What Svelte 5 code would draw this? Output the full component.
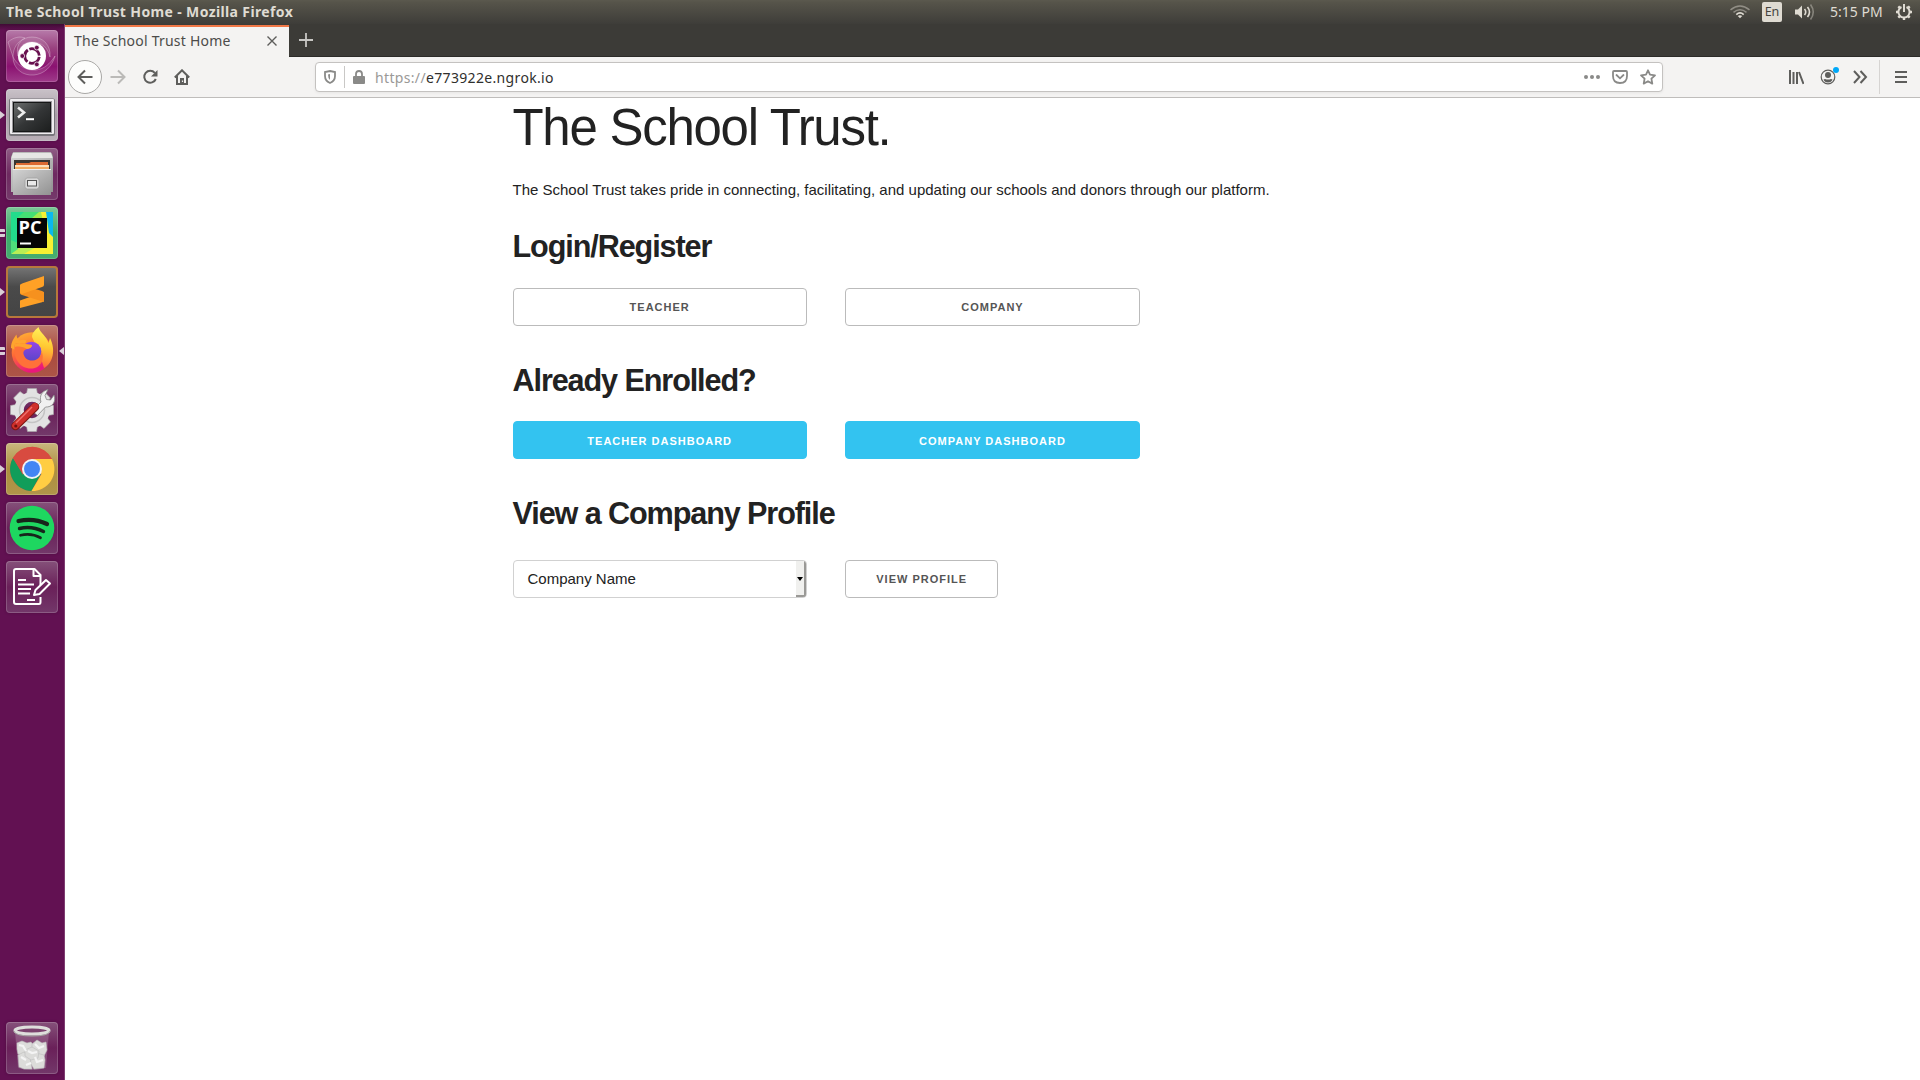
<script>
  const launchers = [
    { id: 'dash', pips: 0 },
    { id: 'terminal', pips: 1 },
    { id: 'files', pips: 0 },
    { id: 'pycharm', pips: 2 },
    { id: 'sublime', pips: 1 },
    { id: 'firefox', pips: 2, active: true },
    { id: 'settings', pips: 0 },
    { id: 'chrome', pips: 1 },
    { id: 'spotify', pips: 0 },
    { id: 'writer', pips: 0 },
    { id: 'trash', pips: 0 }
  ];
  const gearTeeth = [0, 45, 90, 135, 180, 225, 270, 315];
</script>

{#snippet art(id)}
  <svg class="art" viewBox="0 0 52 52" width="52" height="52">
    {#if id === 'dash'}
      <g fill="#fff" fill-opacity=".1" stroke="#fff" stroke-opacity=".3" stroke-width=".9">
        <path d="M12 26C9 14 16 7 26 7c11 0 19 8 18 20-2-9-8-15-18-15-9 0-14 6-14 14z" />
        <path d="M7 27c0 12 10 19 21 18 10-1 18-8 21-19-5 8-11 13-19 14-10 1-18-4-23-13z" />
        <path d="M2 12c6-5 12-6 17-4-8 4-12 10-12 19z" fill-opacity=".06" />
      </g>
      <circle cx="26" cy="26" r="14" fill="#fff" />
      <circle cx="26" cy="26" r="7.300" fill="none" stroke="#68104f" stroke-width="2.800" stroke-dasharray="13.600 1.700" stroke-dashoffset="-.900" />
      <g fill="#68104f" stroke="#fff" stroke-width=".7">
        <circle cx="16.300" cy="26" r="2.400" /><circle cx="30.800" cy="17.600" r="2.400" /><circle cx="30.800" cy="34.400" r="2.400" />
      </g>
    {:else if id === 'terminal'}
      <rect x="3" y="9.500" width="46" height="37.500" rx="2" fill="#77757a" />
      <rect x="4" y="10" width="44" height="35" rx="1" fill="#efedef" />
      <rect x="6" y="12" width="40" height="32" fill="#99979b" />
      <rect x="7" y="13" width="38" height="30" fill="#151616" />
      <rect x="8" y="14" width="36" height="28" fill="url(#termGlass)" />
      <path d="M12 18.500l6 5-6 5" fill="none" stroke="#eee" stroke-width="2.600" />
      <path d="M20 30.200h8" stroke="#fff" stroke-width="2" />
    {:else if id === 'files'}
      <path d="M6 7q0-3 3-3h34q3 0 4 4v36H5V8z" fill="#8d8d8d" />
      <path d="M7 4.500h38l2 6H5z" fill="#e6e6e4" />
      <path d="M5 10h42v34H5z" fill="url(#steel)" />
      <path d="M8 12h36v11H8z" fill="#393532" />
      <path d="M10 15h13l2-1h17v8H10z" fill="#dc6a32" />
      <path d="M9 17h34v5H9z" fill="#f3ad65" />
      <path d="M9 18h34" stroke="#fff1d8" stroke-width="1.300" />
      <path d="M7 21.500h38V47H7z" fill="url(#steel)" />
      <path d="M7 21.500h38" stroke="#f0f0f0" />
      <rect x="19" y="30" width="14" height="11" rx="2.400" fill="#d8d8d8" stroke="#999" stroke-width=".6" />
      <rect x="21.500" y="32.500" width="9" height="5.500" fill="#e9e9e9" stroke="#535353" />
    {:else if id === 'pycharm'}
      <rect x="5" y="5" width="42" height="42" fill="#22dc8c" />
      <path d="M18 5h15v6H11z" fill="#45df74" />
      <path d="M26 11l7-6h7l3 8v20H26z" fill="#a5ea4c" />
      <path d="M5 47l7-9 14-2 10 11z" fill="#b9ee55" />
      <path d="M5 47V33l7 3v6z" fill="#4fe07a" />
      <path d="M18 47l12-7 10-8 3-15 4 15v15z" fill="#f7f033" />
      <path d="M35 5h6l6 24v7l-7-8z" fill="#f7f033" />
      <path d="M40 5h7v25l-4-4z" fill="#0ab9ee" />
      <rect x="11" y="11" width="30" height="30" fill="#050505" />
      <text class="pc" x="12.500" y="27" textLength="23" lengthAdjust="spacingAndGlyphs">PC</text>
      <path d="M14 36.500h11" stroke="#fff" stroke-width="2" />
    {:else if id === 'sublime'}
      <path d="M14 34.500L38 26v7.500q0 2-2 2.700L14 42z" fill="#ffa126" />
      <path d="M14 18.500v8.500q0 1.500 2 2l22 7v-9q0-1.500-2-2z" fill="#f6911e" />
      <path d="M16 17.500L38 10v9q0 1.500-2 2l-20 7q-2 0-2-2v-6q0-2 2-2.500z" fill="#ffa126" />
    {:else if id === 'firefox'}
      <circle cx="26" cy="27.500" r="20.300" fill="url(#flame)" />
      <path d="M5 23C5 17 8 13 10.500 9.500c0 3 1.500 5 3 6 2-1 5-1 7 0l-6 12z" fill="#ffa52e" />
      <path d="M26 12c0-4 3-7 6.500-10 1 5 8 9 10 16l1.500-5c6 12 3 25-6 30L33 27z" fill="url(#flameTop)" />
      <circle cx="25.500" cy="26.500" r="9.800" fill="url(#globe)" />
      <path d="M9 19c6-2.500 10 1 17 1 0 2.500-2 3.500-5 4-3 1-4 2.500-3.500 5 1 4 4.500 7 9.500 6.500 5-.5 9-4.500 8.500-9.500 4 10-2 17.500-10.500 17.500C14 43.500 6 33 9 19z" fill="#ff7139" />
      <path d="M9 19c6-2.500 10 1 17 1 0 2.500-2 3.500-5 4-3-2-8-3-12-2z" fill="#ffa22e" />
    {:else if id === 'settings'}
      <g fill="#e3e3e3" stroke="#a9a9a9" stroke-width=".6">
        {#each gearTeeth as angle}
          <path d="M20 13l1.500-8.500h9L32 13z" transform="rotate({angle} 26 26)" />
        {/each}
      </g>
      <circle cx="26" cy="26" r="13" fill="none" stroke="#e2e2e2" stroke-width="9.500" />
      <circle cx="26" cy="26" r="12.500" fill="none" stroke="#c4c4c4" stroke-width="1.500" />
      <path d="M26 27l9-9c-2-6 1-11 7-12.500l-3 6 1.500 4 4 .5 3.500-5c2.500 7-2 12.500-8.500 12l-8 8.500z" fill="#f1f1f1" stroke="#858585" stroke-width=".8" />
      <path d="M9.500 42L29 23" stroke="#7d1713" stroke-width="8.500" stroke-linecap="round" />
      <path d="M9.500 41.700L29 22.500" stroke="#cf302b" stroke-width="6.800" stroke-linecap="round" />
      <path d="M10 39L26 23" stroke="#ef716c" stroke-width="1.500" />
      <circle cx="9.800" cy="42" r="1.600" fill="#71110e" />
    {:else if id === 'chrome'}
      <circle cx="26" cy="26" r="22" fill="#d84b40" />
      <path d="M7 15a22 22 0 0 0 18.500 33L35 31H17z" fill="#119d5a" />
      <path d="M46 16H26l9.500 15-10 17A22 22 0 0 0 46 16z" fill="#ffcd43" />
      <path d="M7 15l10 17-1-14 10-2h20A22 22 0 0 0 7 15z" fill="#d84b40" />
      <circle cx="26" cy="26" r="10" fill="#f1f3f4" />
      <circle cx="26" cy="26" r="8" fill="#4285f4" />
    {:else if id === 'spotify'}
      <circle cx="26" cy="26" r="22.300" fill="#1ed760" />
      <g fill="none" stroke="#17251b" stroke-linecap="round">
        <path d="M12.500 19q15-3.500 28.500 3" stroke-width="4.200" />
        <path d="M13.500 26.500q12-3 24 3" stroke-width="3.400" />
        <path d="M14.500 33.300q11-2.500 20 2.500" stroke-width="2.700" />
      </g>
    {:else if id === 'writer'}
      <g fill="none" stroke="#fff" stroke-width="2" stroke-linejoin="round">
        <path d="M34.500 24V14l-6-6H10q-2 0-2 2v31q0 2 2 2h23q1.500 0 1.500-2v-5" />
        <path d="M27.500 8v7h7M28 34l1.500-5 10.500-10 4 3.500-10.500 10.500z" />
        <path d="M12 19h8M12 23.500h16M12 28h13M12 32.500h12M21 39h8" />
      </g>
    {:else}
      <path d="M9 9l3 37q14 4 28 0l3-37z" fill="#fff" fill-opacity=".17" />
      <g fill="#dcdcda" stroke="#bdbdbd" stroke-width=".6">
        <path d="M11 21l5-2 5 2 4-1 3 4-2 6-6 4-8-2-1-5z" />
        <path d="M26 22l5-4 5 3 4-1 1 8-3 6-7 1-5-4z" />
        <path d="M12 33l6-3 6 3 1 6 1 8-8 0-5-2z" />
        <path d="M24 34l6-3 8 2 1 5-1 8-10 1-3-5z" />
        <path d="M19 28l7-3 7 4-1 7-7 2-6-4z" />
      </g>
      <path d="M13 23l4 1 3 5M29 22l4 4 5-2M15 35l5 3M29 35l2 5 6-2M22 29l4 2 5-1M20 43l5-2" fill="none" stroke="#f4f4f4" stroke-width="2.200" />
      <ellipse cx="26" cy="8.500" rx="17" ry="3.500" fill="#7b426e" stroke="#dededc" stroke-width="3" />
      <path d="M8 9q1 5 18 5t18-5" fill="none" stroke="#a7a8a5" />
    {/if}
  </svg>
{/snippet}

<svg class="defs" width="0" height="0">
  <defs>
    <linearGradient id="termGlass" x2="1" y2="1"><stop stop-color="#6b6d6d" /><stop offset=".5" stop-color="#343637" /><stop offset="1" stop-color="#1d1f1f" /></linearGradient>
    <linearGradient id="steel" x2="1" y2="1"><stop stop-color="#d3d3d3" /><stop offset="1" stop-color="#929292" /></linearGradient>
    <linearGradient id="flame" x2=".3" y2="1"><stop stop-color="#ffba32" /><stop offset=".55" stop-color="#ff6837" /><stop offset="1" stop-color="#e9187b" /></linearGradient>
    <linearGradient id="flameTop" x1=".3" x2=".2" y2="1"><stop stop-color="#fff15a" /><stop offset=".45" stop-color="#ffc832" /><stop offset="1" stop-color="#ff5f3d" /></linearGradient>
    <linearGradient id="globe" x2="0" y2="1"><stop stop-color="#9446e7" /><stop offset="1" stop-color="#5a45c9" /></linearGradient>
  </defs>
</svg>

<div class="screen">
  <header class="panel">
    <span class="window-title">The School Trust Home - Mozilla Firefox</span>
    <div class="indicators">
      <svg class="wifi" width="20" height="14" viewBox="0 0 20 14" fill="none" stroke="#dfdbd2" stroke-width="1.500">
        <path d="M.5 4.800Q10-2.600 19.500 4.800M3.500 7.300Q10 2 16.500 7.300" opacity=".45" /><path d="M6.300 9.600Q10 6.300 13.700 9.600" stroke-width="1.700" /><path d="M7.700 11Q10 9.300 12.300 11L10 13.300z" fill="#dfdbd2" stroke="none" />
      </svg>
      <span class="lang">En</span>
      <svg class="volume" width="20" height="18" viewBox="0 0 20 18" fill="none" stroke="#dfdbd2" stroke-width="1.600">
        <path d="M0 6.500h3l4-4v13l-4-4H0z" fill="#dfdbd2" stroke="none" /><path d="M9.500 6q2.500 3 0 6M12.500 4q4 5 0 10" /><path d="M15.500 1.500q5.500 7.500 0 15" opacity=".4" />
      </svg>
      <span class="clock">5:15 PM</span>
      <svg class="gear" width="18" height="18" viewBox="0 0 18 18" fill="none" stroke="#dfdbd2">
        <path d="M6.500 4A5.600 5.600 0 1 0 11.500 4" stroke-width="2" /><path d="M9 1v8" stroke-width="2" />
        <path d="M1 9h2M15 9h2M9 15v2M3.300 3.300l1.600 1.600M14.700 3.300l-1.600 1.600M3.300 14.700l1.600-1.600M14.700 14.700l-1.600-1.600" stroke-width="2.400" />
      </svg>
    </div>
  </header>

  <div class="desktop">
    <nav class="launcher">
      {#each launchers as item}
        <div class="tile {item.id}">
          {@render art(item.id)}
          {#if item.pips === 1}<i class="pip"></i>{/if}
          {#if item.pips === 2}<i class="pip double"></i>{/if}
          {#if item.active}<i class="active"></i>{/if}
        </div>
      {/each}
    </nav>

    <div class="browser">
      <div class="tabs">
        <div class="tab">
          <span>The School Trust Home</span>
          <svg width="10" height="10" viewBox="0 0 10 10" stroke="#5d5d5b" stroke-width="1.400"><path d="M.5.5l9 9M9.500.5l-9 9" /></svg>
        </div>
        <svg class="plus" width="14" height="14" viewBox="0 0 14 14" stroke="#c8c7c4" stroke-width="1.800"><path d="M7 0v14M0 7h14" /></svg>
      </div>
      <div class="toolbar">
        <div class="nav-buttons">
          <span class="back"><svg width="16" height="16" viewBox="0 0 16 16"><path d="M15.500 8H2M8 1.500L1.500 8 8 14.500" /></svg></span>
          <svg class="dim" width="16" height="16" viewBox="0 0 16 16"><path d="M.5 8H14M8 1.500L14.500 8 8 14.500" /></svg>
          <svg width="16" height="16" viewBox="0 0 16 16"><path d="M12.800 3.800A6 6 0 1 0 13.800 10" /><path d="M15.500 1v6.500H9z" class="solid" /></svg>
          <svg width="16" height="16" viewBox="0 0 16 16"><path d="M.8 8.500L8 1.300l7.200 7.200M3 7v8h10V7" /><path d="M6 9h4v6H6z" class="solid" /><path d="M8.500 11.500v1.500" class="knob" /></svg>
        </div>
        <div class="urlbar">
          <svg class="shield" width="12" height="14" viewBox="0 0 12 14"><path d="M6 1l5 1v4q0 5-5 7-5-2-5-7V2z" /><path d="M6 4v6q-2-1.500-2-5.500z" class="solid" /></svg>
          <i class="divider"></i>
          <svg class="lock" width="12" height="14" viewBox="0 0 12 14"><path d="M3 7V4q0-3 3-3t3 3v3" /><rect y="6" width="12" height="8" rx="1" class="solid" /></svg>
          <span class="address"><span>https://</span>e773922e.ngrok.io</span>
          <div class="page-actions">
            <svg width="16" height="16" viewBox="0 0 16 16"><g class="solid"><circle cx="2" cy="8" r="2" /><circle cx="8" cy="8" r="2" /><circle cx="14" cy="8" r="2" /></g></svg>
            <svg width="16" height="16" viewBox="0 0 16 16"><path d="M2 2h12q1 0 1 1v4q0 7-7 7T1 7V3q0-1 1-1z" /><path d="M4.500 6L8 9.300 11.500 6" stroke-linecap="round" /></svg>
            <svg width="16" height="16" viewBox="0 0 16 16"><path d="M8 1.300l2 4.400 5 .6-3.600 3.400.9 4.900L8 12.200l-4.300 2.400.9-4.900L1 6.300l5-.6z" stroke-linejoin="round" /></svg>
          </div>
        </div>
        <div class="tools">
          <svg width="16" height="16" viewBox="0 0 16 16"><path d="M2 1v14M5.500 3v12M9 3v12M11 3l4.500 12" /></svg>
          <span class="account">
            <svg width="16" height="16" viewBox="0 0 16 16"><circle cx="8" cy="8" r="6.800" stroke-width="1.200" /><circle cx="8" cy="6" r="3" class="solid" /><path d="M3.500 10.500q1.500-1 3 0h3q1.500-1 3 0-1 3-4.500 3t-4.500-3z" class="solid" /></svg>
            <i></i>
          </span>
          <svg width="16" height="16" viewBox="0 0 16 16"><path d="M2 2l5.500 6L2 14M8.500 2l5.500 6-5.500 6" /></svg>
          <i class="rule"></i>
          <svg class="menu" width="12" height="16" viewBox="0 0 12 16"><path d="M0 3h12M0 8h12M0 13h12" /></svg>
        </div>
      </div>

      <main>
        <div class="container">
          <h1>The School Trust.</h1>
          <p>The School Trust takes pride in connecting, facilitating, and updating our schools and donors through our platform.</p>
          <h3>Login/Register</h3>
          <div class="row">
            <button>Teacher</button>
            <button>Company</button>
          </div>
          <h3 class="enrolled">Already Enrolled?</h3>
          <div class="row">
            <button class="primary">Teacher Dashboard</button>
            <button class="primary">Company Dashboard</button>
          </div>
          <h3 class="profile">View a Company Profile</h3>
          <div class="row">
            <div class="select"><span>Company Name</span><b><i></i></b></div>
            <button class="fit">View Profile</button>
          </div>
        </div>
      </main>
    </div>
  </div>
</div>

<style>
  :global(body) { margin: 0; overflow: hidden; }
  * { box-sizing: border-box; }
  svg { display: block; flex: none; }
  .defs { position: absolute; }
  .screen { width: 1920px; height: 1080px; display: flex; flex-direction: column; background: #fff; overflow: hidden; }

  .panel { height: 24px; flex: none; display: flex; justify-content: space-between; align-items: center; padding: 0 7px 0 6px; background: linear-gradient(#5b594e, #56544a 10%, #3e3d39); color: #dfdbd2; font-family: "Noto Sans", "Open Sans", sans-serif; }
  .window-title { font-size: 14px; line-height: 24px; font-weight: 700; letter-spacing: .37px; white-space: nowrap; }
  .indicators { display: flex; align-items: center; height: 24px; }
  .lang { width: 20px; height: 20px; margin: 0 13px 0 12px; border-radius: 2px; background: #dfdbd2; color: #45433e; font-size: 12.5px; line-height: 20px; text-align: center; }
  .clock { width: 54px; margin: 0 11px 0 15px; font-size: 14px; letter-spacing: 0; line-height: 24px; white-space: nowrap; }

  .desktop { flex: 1; display: flex; min-height: 0; }
  .launcher { width: 65px; flex: none; display: flex; flex-direction: column; gap: 7px; padding: 6px 6px; border-right: 1px solid #7e3d71; background: linear-gradient(#400b35, #621152 6px); }
  .tile { position: relative; width: 52px; height: 52px; flex: none; border-radius: 4px; background: linear-gradient(#85517a, #6a2059 50%, #73386a); box-shadow: inset 0 0 0 1px rgba(255, 255, 255, .18), 0 0 3px rgba(30, 0, 25, .3); }
  .dash { background: linear-gradient(#b77baa, #99417f 35%, #8b1271 70%, #9f3b8a); }
  .terminal { background: linear-gradient(#c9c2c8, #a89ca6 50%, #b9afb7); }
  .files { background: linear-gradient(#8f5d85, #6e2960 50%, #753a6b); }
  .pycharm { background: linear-gradient(#7cc797, #3bae6b 50%, #46ac6f); }
  .sublime { background: linear-gradient(#777, #4a4a4a 40%, #444); box-shadow: inset 0 0 0 2px #b8783b; }
  .firefox { background: linear-gradient(#bd7c70, #aa4a3d 50%, #ad5548); }
  .chrome { background: linear-gradient(#c9b77e, #ae8f3f 50%, #b0954a); }
  .trash { margin-top: auto; }
  .art { position: relative; }
  .pc { font: 700 17px "Open Sans", sans-serif; fill: #fff; }
  .pip { position: absolute; left: -6px; top: 22px; border: solid transparent; border-width: 4px 0 4px 5px; border-left-color: #d9cfd7; }
  .pip.double { width: 5px; height: 8px; border: solid #d9cfd7; border-width: 3px 0; border-radius: 0 1px 1px 0; }
  .active { position: absolute; right: -6px; top: 22px; border: solid transparent; border-width: 4px 5px 4px 0; border-right-color: #d9cfd7; }

  .browser { flex: 1; display: flex; flex-direction: column; min-width: 0; }
  .tabs { height: 33px; flex: none; display: flex; align-items: center; background: #3c3b37; box-shadow: inset 0 -1px #2c2b28; }
  .tab { width: 224px; height: 32px; margin-top: 1px; display: flex; align-items: center; justify-content: space-between; padding: 0 12px 3px 9px; border-top: 2px solid #f07746; background: #f4f3f2; color: #4c4c4a; font: 14px "Noto Sans", "Open Sans", sans-serif; }
  .tab span { white-space: nowrap; letter-spacing: .22px; }
  .plus { margin: 0 0 1px 10px; }
  .toolbar { height: 41px; flex: none; display: flex; align-items: center; padding: 0 13px 1px 3px; background: #f4f3f2; border-bottom: 1px solid #bfbdbb; }
  .toolbar svg { fill: none; stroke: #5e5e5c; stroke-width: 2; }
  .toolbar .solid { fill: #5e5e5c; stroke: none; }
  .toolbar .knob { stroke: #f4f3f2; stroke-width: 1.2; }
  .nav-buttons { display: flex; align-items: center; gap: 16px; width: 247px; }
  .back { width: 34px; height: 34px; display: grid; place-items: center; border: 1px solid #a9a8a6; border-radius: 50%; background: #fdfdfc; margin-right: -8px; }
  .toolbar .dim { stroke: #bbbab8; }
  .urlbar { width: 1348px; height: 30px; display: flex; align-items: center; padding: 0 6px 0 8px; background: #fff; border: 1px solid #c4c2c0; border-radius: 4px; box-shadow: 0 1px 3px rgba(0, 0, 0, .06); }
  .toolbar .urlbar svg { stroke: #8a8a88; stroke-width: 1.8; }
  .toolbar .urlbar .solid { fill: #8a8a88; }
  .divider { width: 1px; height: 22px; margin: 0 8px; background: #c9c8c6; }
  .address { margin-left: 10px; padding-top: 1px; color: #2f2f2d; font: 14px/27px "Noto Sans", "Open Sans", sans-serif; letter-spacing: .34px; white-space: nowrap; }
  .address span { color: #9a9997; }
  .page-actions { display: flex; gap: 12px; margin-left: auto; }
  .tools { display: flex; align-items: center; margin-left: auto; gap: 16px; }
  .account { position: relative; }
  .account i { position: absolute; top: -2px; right: -3px; width: 6px; height: 6px; border-radius: 50%; background: #00a8f8; }
  .rule { width: 1px; height: 34px; margin: 0 0 0 -5px; background: #d6d4d2; }
  .menu { margin-left: -1px; }

  main { flex: 1; background: #fff; font-family: "Liberation Sans", Arial, sans-serif; color: #222; }
  .container { width: 960px; margin: 0 auto; }
  h1 { margin: 0 0 20px; font-size: 51px; line-height: 60px; font-weight: 300; letter-spacing: -1.28px; }
  p { margin: 0 0 25px; font-size: 15px; line-height: 24px; }
  h3 { margin: 0 0 22px; font-size: 30.6px; line-height: 39px; font-weight: 700; letter-spacing: -1.1px; }
  .enrolled { margin: 35px 0 21px; }
  .profile { margin: 35px 0 27px; }
  .row { display: grid; grid-template-columns: 294.4px 294.4px; gap: 38.4px; }
  button { height: 38px; padding: 0; border: 1px solid #bbb; border-radius: 4px; background: transparent; color: #555; font: 600 11px/36px "Liberation Sans", Arial, sans-serif; letter-spacing: 1px; text-transform: uppercase; white-space: nowrap; }
  .primary { padding-top: 2px; background: #33c3f0; border-color: #33c3f0; color: #fff; line-height: 34px; }
  .fit { padding: 0 30px; justify-self: start; }
  .select { height: 38px; display: flex; align-items: center; justify-content: space-between; padding-left: 14px; border: 1px solid #d1d1d1; border-radius: 4px; font-size: 15px; overflow: hidden; }
  .select span { padding-bottom: 2px; }
  .select b { width: 10px; height: 36px; display: grid; place-items: center; background: #f0f0ee; border: solid #9a9996; border-width: 0 2px 2px 0; }
  .select i { margin-top: 2px; border: solid transparent; border-width: 4px 3px 0; border-top-color: #000; }
</style>
